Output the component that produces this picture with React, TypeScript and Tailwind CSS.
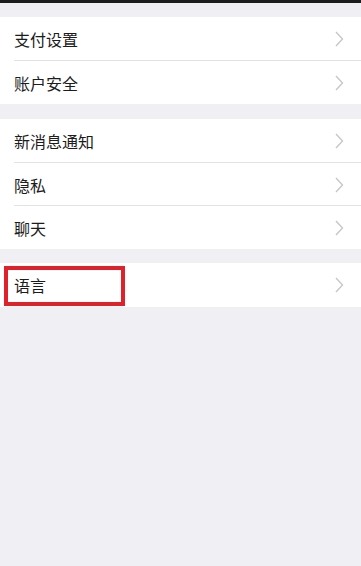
import React from "react";

function Chevron() {
  return (
    <svg width="9" height="16" viewBox="0 0 9 16" className="shrink-0">
      <path d="M1 1 L7.5 8 L1 15" fill="none" stroke="#c4c4c9" strokeWidth="1.3" />
    </svg>
  );
}

function Row({ label, h, sep }: { label: string; h: string; sep?: boolean }) {
  return (
    <div className={`relative flex items-center justify-between bg-white pl-[14px] pr-[17px] ${h}`}>
      <span className="text-[16px] leading-none text-[#1c1c1c]">{label}</span>
      <Chevron />
      {sep && <div className="absolute bottom-0 left-[14px] right-0 h-px bg-[#e2e2e6]" />}
    </div>
  );
}

export default function App() {
  return (
    <div
      className="flex min-h-[566px] w-[361px] flex-col bg-[#efeff4]"
      style={{ fontFamily: '"Noto Sans CJK SC", "Noto Sans", sans-serif' }}
    >
      <div className="h-[3px] bg-[#1c1c1f]" />
      <div className="h-[14px]" />
      <div>
        <Row label="支付设置" h="h-[44px]" sep />
        <Row label="账户安全" h="h-[43px]" />
      </div>
      <div className="h-[15px]" />
      <div>
        <Row label="新消息通知" h="h-[44px]" sep />
        <Row label="隐私" h="h-[43px]" sep />
        <Row label="聊天" h="h-[43px]" />
      </div>
      <div className="h-[14px]" />
      <div className="relative">
        <Row label="语言" h="h-[44px]" />
        <div className="absolute left-[4px] top-[3px] h-[40px] w-[121px] border-[4px] border-[#e0202b]" />
      </div>
    </div>
  );
}
